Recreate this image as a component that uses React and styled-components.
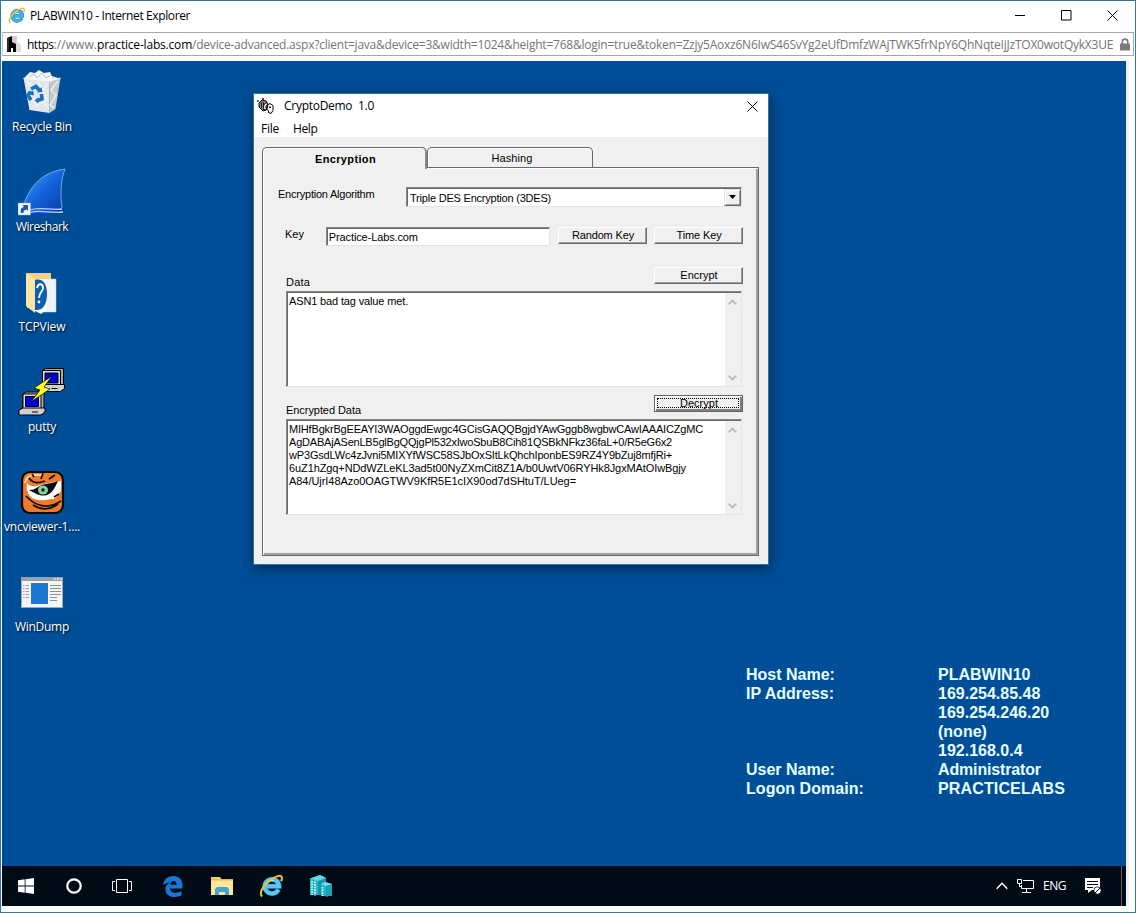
import React from 'react';
import styled, { createGlobalStyle, css } from 'styled-components';

const Global = createGlobalStyle`
  *, *::before, *::after { box-sizing: border-box; }
  body { margin: 0; background: #fff; overflow: hidden; }
`;

const UI = '"Open Sans", "Noto Sans", sans-serif';
const CLASSIC = '"Liberation Sans", Arial, sans-serif';

const Text = styled.span`
  white-space: pre;
  letter-spacing: ${(p) => p.$track || 0}px;
  ${(p) => p.$color && `color: ${p.$color};`}
`;

/* Browser window */
const BrowserWindow = styled.div`
  width: 1136px;
  height: 913px;
  display: flex;
  flex-direction: column;
  background: #fff;
  border: 1px solid #2f7aa8;
  border-top-color: #41708c;
  font: 12px/16px ${UI};
  color: #000;
`;

const BrowserTitle = styled.header`
  height: 31px;
  display: flex;
  align-items: center;
  padding: 0 17px 2px 7px;
  gap: 5px;
  svg { display: block; }
`;

const CaptionButtons = styled.div`
  margin-left: auto;
  display: flex;
  align-items: center;
  gap: 35px;
`;

const AddressBar = styled.div`
  height: 24px;
  margin: 0 1px 0 1px;
  border: 1px solid #a6a6a6;
  border-left-color: #c8c8c8;
  display: flex;
  align-items: center;
  padding: 0 3px 0 4px;
  svg { display: block; flex: none; }
`;

const Url = styled.div`
  flex: 1;
  padding: 1px 0 0 6px;
  white-space: nowrap;
  overflow: hidden;
  color: #757575;
`;

const Viewport = styled.main`
  margin: 5px 8px 0 1px;
  width: 1124px;
  height: 845px;
  display: flex;
  flex-direction: column;
  box-shadow: 3px 0 0 #f0f0f0;
`;

/* Remote desktop */
const Desktop = styled.section`
  position: relative;
  height: 805px;
  background: #004e98;
  overflow: hidden;
`;

const IconColumn = styled.div`
  width: 80px;
  padding-top: 7px;
  display: flex;
  flex-direction: column;
`;

const DesktopIcon = styled.div`
  height: 100px;
  display: flex;
  flex-direction: column;
  align-items: center;
  color: #fff;
  text-shadow: 1px 1px 2px #000;
  svg { display: block; flex: none; }
`;

const IconLabel = styled.div`
  margin-top: 3px;
  height: 16px;
  white-space: nowrap;
`;

const HostInfo = styled.div`
  position: absolute;
  left: 744px;
  top: 604px;
  display: grid;
  grid-template-columns: 192px auto;
  font: bold 16px/19px ${CLASSIC};
  color: #e6ffff;
  white-space: nowrap;
`;

/* Application dialog */
const Dialog = styled.section`
  position: absolute;
  left: 251px;
  top: 32px;
  width: 516px;
  height: 472px;
  border: 1px solid #2a78a8;
  background: #f0f0f0;
  box-shadow: 1px 3px 12px rgba(0, 0, 0, 0.5);
  font: 11px/13px ${CLASSIC};
`;

const DialogTitle = styled.div`
  height: 24px;
  background: #fff;
  display: flex;
  align-items: center;
  padding: 0 10px 0 3px;
  gap: 10px;
  font: 12px/16px ${UI};
  svg { display: block; flex: none; }
  svg:last-child { margin-left: auto; }
`;

const MenuBar = styled.div`
  height: 19px;
  background: #fff;
  display: flex;
  align-items: center;
  gap: 14px;
  padding: 2px 0 0 7px;
  font: 12px/16px ${UI};
`;

const Tabs = styled.div`
  display: flex;
  margin: 10px 0 0 8px;
  height: 20px;
`;

const Tab = styled.div`
  position: relative;
  height: 20px;
  width: 166px;
  display: flex;
  justify-content: center;
  align-items: center;
  border: 1px solid #696969;
  border-bottom: 0;
  border-radius: 5px 5px 0 0;
  background: #f0f0f0;
  box-shadow: inset 1px 1px 0 #fff;
  ${(p) => p.$active
    ? css`
        z-index: 1;
        width: 165px;
        height: 22px;
        font-weight: bold;
        border-right: 2px solid #8a8a8a;
        padding: 1px 0 0 3px;
      `
    : css`
        padding: 2px 0 0 4px;
      `}
`;

const TabPanel = styled.div`
  width: 497px;
  height: 389px;
  margin-left: 8px;
  border: 1px solid #696969;
  box-shadow: inset 1px 1px 0 #fff, inset -2px -2px 0 #a0a0a0;
  padding: 19px 15px 0 23px;
`;

const FieldRow = styled.div`
  display: flex;
  align-items: flex-start;
  height: ${(p) => p.$height}px;
`;

const AlgorithmLabel = styled.label`
  width: 128px;
  margin-left: -8px;
  padding-top: 1px;
`;

const KeyLabel = styled.label`
  width: 41px;
  margin-left: -1px;
  padding-top: 1px;
`;

const sunken = css`
  background: #fff;
  border: 1px solid;
  border-color: #848484 #e4e4e4 #e4e4e4 #848484;
  box-shadow: inset 1px 1px 0 #696969;
`;

const Combo = styled.div`
  ${sunken}
  width: 336px;
  height: 20px;
  display: flex;
  align-items: center;
  justify-content: space-between;
  padding: 1px 0 1px 3px;
`;

const ComboText = styled(Text)`
  padding-top: 2px;
`;

const DropButton = styled.span`
  width: 17px;
  height: 17px;
  display: flex;
  align-items: center;
  justify-content: center;
  background: #f0f0f0;
  border: 1px solid;
  border-color: #e3e3e3 #696969 #696969 #e3e3e3;
  box-shadow: inset 1px 1px 0 #fff, inset -1px -1px 0 #a0a0a0;
`;

const KeyInput = styled.div`
  ${sunken}
  width: 225px;
  height: 19px;
  padding: 3px 0 0 2px;
  margin-right: 8px;
`;

const PushButton = styled.div`
  width: 89px;
  height: 17px;
  flex: none;
  display: flex;
  align-items: center;
  justify-content: center;
  background: #f0f0f0;
  border: 1px solid;
  border-color: #fff #696969 #696969 #fff;
  box-shadow: inset -1px -1px 0 #a0a0a0;
  padding-left: 1px;
  & + & { margin-left: 7px; }
  ${(p) => p.$focused && css`
    border-color: #646464;
    box-shadow: inset 1px 1px 0 #fff, inset -2px -2px 0 #808080;
    padding: 0 1px 1px 0;
  `}
`;

const FocusRing = styled.span`
  width: 82px;
  height: 10px;
  border: 1px dotted #000;
  display: flex;
  align-items: center;
  justify-content: center;
  padding-left: 2px;
`;

const LabelRow = styled.div`
  display: flex;
  justify-content: space-between;
  height: ${(p) => p.$height}px;
`;

const SectionLabel = styled.span`
  align-self: flex-end;
  margin-bottom: 2px;
`;

const ButtonSlot = styled.div`
  padding-top: ${(p) => p.$top || 0}px;
`;

const TextArea = styled.div`
  ${sunken}
  width: 456px;
  height: 96px;
  display: flex;
`;

const Lines = styled.div`
  flex: 1;
  padding: 3px 0 0 2px;
  display: flex;
  flex-direction: column;
`;

const ScrollTrack = styled.div`
  width: 16px;
  margin: 1px 0 0;
  background: #f0f0f0;
  display: flex;
  flex-direction: column;
  justify-content: space-between;
  align-items: center;
  padding: 6px 1px 5px 0;
  svg { display: block; }
`;

/* Taskbar */
const Taskbar = styled.footer`
  height: 40px;
  background: #010b16;
  display: flex;
  align-items: center;
  color: #fff;
  svg { display: block; }
`;

const TaskButton = styled.div`
  width: ${(p) => p.$w}px;
  height: 40px;
  display: flex;
  align-items: center;
  justify-content: center;
`;

const Tray = styled.div`
  margin-left: auto;
  height: 40px;
  padding-right: 19px;
  margin-right: 4px;
  border-right: 1px solid #5a6068;
  display: flex;
  align-items: center;
  gap: 9px;
`;

const TrayLabel = styled.span`
  margin-right: 9px;
`;

/* Drawings */
const IELogo = ({ size, body = '#3fb0e8' }) => (
  <svg width={size} height={size} viewBox="0 0 24 24" fill="none">
    <path d="M19.500 15.500a7.200 7.200 0 1 1 .7-3.200H6.500" stroke="#1c78b8" strokeWidth="5" />
    <path d="M19.300 15.500a7.100 7.100 0 1 1 .7-3.200H6.500" stroke={body} strokeWidth="4" />
    <path d="M8 8.800c1.500-2.200 4-2.700 6.300-2" stroke="#b9ebff" strokeWidth="1.300" />
    <path d="M3.200 22.300C.2 20.300 2.500 13 9.500 7.300 15.500 2.300 21.500.5 22.700 3c.5 1 .2 2.600-.6 4.200" stroke="#f0c22e" strokeWidth="2" />
  </svg>
);

const SiteIcon = () => (
  <svg width="14" height="16" viewBox="0 0 14 16">
    <path d="M5 0h5v9H5z" fill="#cfcfcf" />
    <path d="M9 5l5 4v7H8z" fill="#dedede" />
    <path d="M0 2l5-2v6l4 2v8H6v-4H4v4H0z" fill="#000" />
    <path d="M1 2v13" stroke="#555" />
  </svg>
);

const Lock = () => (
  <svg width="10" height="13" viewBox="0 0 10 13">
    <path d="M2.300 6V3.800a2.700 2.700 0 0 1 5.400 0V6" fill="none" stroke="#7a7a7a" strokeWidth="1.600" />
    <rect y="5.500" width="10" height="7" rx=".7" fill="#7a7a7a" />
  </svg>
);

const Cross = ({ size }) => (
  <svg width={size} height={size} viewBox="0 0 11 11">
    <path d="M.5.500l10 10M10.500.500l-10 10" stroke="#000" strokeWidth="1" />
  </svg>
);

const RecycleBin = () => (
  <svg width="48" height="48" viewBox="0 0 48 48">
    <path d="M7 9l5-5 5 1 4-3 5 3 6-1 2 4 6 2-4 5H9z" fill="#f2f4f5" />
    <path d="M11 9l5-3 3 4 5-5 4 5 5-3 3 4" fill="none" stroke="#bcc5cb" />
    <path d="M5.500 10l26 3v32l-20-3z" fill="#e3e7ea" />
    <path d="M31.500 13l11-3-5 31-6 4z" fill="#c3c9cd" />
    <path d="M5.500 10l26 3 11-3" fill="none" stroke="#fafafa" strokeWidth="1.200" />
    <path d="M9 13l7 8-4 5 6 12 7-5 6 8M30 15l-6 9 6 8M19 12l6 10M40 13l-7 9 5 5-6 10 4 3" stroke="#f8f9fa" strokeWidth="1.400" fill="none" opacity=".8" />
    <path d="M13 21l5-2.500 3.500 4M23.500 26l.5 5-5 1.500M13 32l-3-4.500 2.500-4" fill="none" stroke="#1372c4" strokeWidth="3.600" />
    <path d="M19 24.500l5.500-.5-1-5zM20.500 29.500v6l-4-3zM9 25.500l6-3 1 5z" fill="#1372c4" />
  </svg>
);

const Shortcut = () => (
  <g>
    <rect x="0" y="35" width="12.500" height="12" fill="#f4f6f8" stroke="#9ab" strokeWidth=".5" />
    <path d="M3 45c-.9-3.500 0-5.500 3-6l-1.500-2H10v6l-1.500-1.600C6 42 5.500 43 5.500 45z" fill="#1b5aa6" />
  </g>
);

const Wireshark = () => (
  <svg width="48" height="48" viewBox="0 0 48 48">
    <defs>
      <linearGradient id="fin" x1="0" y1="0" x2="1" y2="1">
        <stop offset="0" stopColor="#4ea2ff" />
        <stop offset=".5" stopColor="#1464dc" />
        <stop offset="1" stopColor="#0638a4" />
      </linearGradient>
    </defs>
    <path d="M3 45C9 20 24 3 47 1c-5 11-5 29-2 45z" fill="url(#fin)" />
    <path d="M5 39C12 17 25 4 47 1c-4 10-5 24-3 39" fill="none" stroke="#7ebcff" strokeWidth=".8" />
    <path d="M12 42c10-4 21 1 32-1M12 44.500c10-3 21 1 33-.5" stroke="#b9d5ff" strokeWidth="1.300" fill="none" />
    <Shortcut />
  </svg>
);

const TcpFolder = () => (
  <svg width="48" height="48" viewBox="0 0 48 48">
    <path d="M9 5h24v35H9z" fill="#f1d37f" />
    <path d="M24 11h14v33H24z" fill="#eef4fa" stroke="#cfd8e2" strokeWidth=".5" />
    <path d="M17 12l8-1 4 5v25l-6 5-6-3z" fill="#fff" />
    <path d="M17 12c8-2 12 4 12 14s-4 17-12 16z" fill="#0c5db2" />
    <path d="M19 20c1-5 6-5 6 0 0 4-4 4-4 10" fill="none" stroke="#fff" strokeWidth="1.800" />
    <circle cx="21" cy="34" r="1.400" fill="#fff" />
    <path d="M8 5l9 6v34l-9-7z" fill="#fbe6a5" />
  </svg>
);

const Computer = () => (
  <g stroke="#000" strokeWidth="1">
    <path d="M4 2l3-2h18v15l-3 3H4z" fill="#a8a8a8" />
    <path d="M4 2h18v15H4z" fill="#dcdcdc" />
    <path d="M6.500 4.500h13v10h-13z" fill="#0000e0" />
    <path d="M0 18l4-2h22v4l-4 3H0z" fill="#d0d0d0" />
    <path d="M13 20h6" />
  </g>
);

const Putty = () => (
  <svg width="48" height="48" viewBox="0 0 48 48">
    <g transform="translate(20.500 .5)"><Computer /></g>
    <g transform="translate(1 24)"><Computer /></g>
    <path d="M34 8L16 20l6 2-9 12 19-13-6-2z" fill="#ffff20" stroke="#000" strokeWidth=".7" />
  </svg>
);

const Vnc = () => (
  <svg width="48" height="48" viewBox="0 0 48 48">
    <rect x="4" y="4" width="41" height="41" rx="8" fill="#f07a2a" stroke="#0a0a0a" strokeWidth="2.200" />
    <path d="M7 15c1-5 4-8 9-8h8" fill="none" stroke="#ffd2a8" strokeWidth="2" />
    <path d="M9 15c3 4 8 4 13 2l13-3 8-1v10c-3 4-5 9-10 8-8 2-17 2-21-3-3-4-4-8-3-13z" fill="#fff" />
    <path d="M11 22c4 0 6-1 9-3 6-4 12-3 20-6-3 6-5 12-11 14-7 2-12-2-18-5z" fill="#0c0c0c" />
    <ellipse cx="25" cy="22" rx="5" ry="4.500" fill="#8ed09a" />
    <circle cx="25" cy="22" r="1.800" fill="#0b2b12" />
    <path d="M11 10c4 6 11 5 16 3M23 11l2-6M16 9l-2-3M31 11l6-4M8 28c9 10 22 14 35 5M15 37c8 5 17 5 25-1M36 29l5-3" fill="none" stroke="#111" strokeWidth="1.700" />
  </svg>
);

const WinDump = () => (
  <svg width="48" height="48" viewBox="0 0 48 48">
    <rect x="3.500" y="9.500" width="41" height="30" fill="#f4f4f4" stroke="#a4a8ac" />
    <path d="M3 9h42v4H3z" fill="#9aa0a4" />
    <path d="M36 11h1.500M39 11h1.500M42 11h1.500" stroke="#fff" strokeWidth="1.500" />
    <rect x="13" y="15" width="17" height="21" fill="#1a78d0" />
    <path d="M5 17.500h6M5 20.500h6M5 23.500h6M5 26.500h6M5 29.500h6" stroke="#a0a0a0" strokeDasharray="1.500 1 3.500" />
    <path d="M32 17.500h11M32 20.500h11M32 23.500h11M32 26.500h11M32 29.500h7M32 32.500h7" stroke="#8f8f8f" />
  </svg>
);

const AppIcon = () => (
  <svg width="17" height="17" viewBox="0 0 17 17">
    <path d="M0 2h2v2H0z" fill="#18a058" />
    <path d="M5 0h2v2H5z" fill="#c8203c" />
    <path d="M2 5l3-3 4 1 2 3-2 6-3 1-4-4z" fill="#888" stroke="#000" />
    <path d="M4.500 4v6M6.500 4v8" stroke="#222" />
    <path d="M6.500 9.500c0-3 1-4.500 3-4.500.8 0 1.500.5 1.500 1.500C8.500 7 8.500 10 10 11.500c-2 1-3.500 0-3.500-2z" fill="#eee" stroke="#000" />
    <path d="M10.500 7.500l2.500-2 3 2v5l-2 3-2.500-1v-2l-1.500-1z" fill="#fff" stroke="#000" />
    <path d="M12 8.500h2v1.500h-2z" fill="#111" />
  </svg>
);

const ScrollArrow = ({ down }) => (
  <svg width="9" height="6" viewBox="0 0 9 6">
    <path d={down ? 'M.7.800l3.800 3.700L8.300.8' : 'M.7 5.200l3.800-3.700 3.800 3.700'} fill="none" stroke="#bdbdbd" strokeWidth="1.900" />
  </svg>
);

const StartLogo = () => (
  <svg width="16" height="16" viewBox="0 0 16 16" fill="#fff">
    <path d="M0 2.300L6.700 1.300v6.300H0zM7.500 1.200L16 0v7.600H7.500zM0 8.400h6.700v6.300L0 13.700zM7.500 8.400H16V16l-8.500-1.200z" />
  </svg>
);

const TaskView = () => (
  <svg width="20" height="14" viewBox="0 0 20 14" fill="none" stroke="#fff">
    <path d="M4.500.5h11v13h-11zM3 2.500H.5v9H3M17 2.500h2.500v9H17" />
  </svg>
);

const Edge = () => (
  <svg width="20" height="21" viewBox="0 0 21 22">
    <path d="M0 9.500C.8 4 4.500 0 11 0c6 0 9.500 4 9.500 9.500V13H7.300c.2 3 2.500 4.500 5.700 4.500 2.500 0 4.700-.7 6.500-1.800v4.500c-2 1.200-4.500 1.800-7.500 1.800-6 0-9.500-3.500-9.500-8.500 0-3 1.800-5.500 4.700-6.800C4 7 1.500 8 0 9.500zm7.500-.3h6.800c0-2.500-1.200-4-3.300-4-2 0-3.200 1.400-3.500 4z" fill="#1878d4" />
  </svg>
);

const Explorer = () => (
  <svg width="22" height="18" viewBox="0 0 22 18">
    <path d="M0 0h9l1.500 2H22v16H0z" fill="#f3d06b" />
    <path d="M0 4h22v14H0z" fill="#fce79c" />
    <path d="M0 2.500h22" stroke="#d9b050" strokeWidth=".7" />
    <path d="M4 18v-6l2-2h10l2 2v6h-4v-3H8v3z" fill="#41a5d0" />
  </svg>
);

const Buildings = () => (
  <svg width="23" height="22" viewBox="0 0 23 22">
    <path d="M1 3.500L11 0l6 3v17H1z" fill="#25b6c8" />
    <path d="M9 5l8-2v17H9z" fill="#1497ab" />
    <path d="M1 3.500L11 0l6 3-8 3z" fill="#5ddbe6" />
    <path d="M12 9l4-2 7 2v12h-11z" fill="#20b4c6" />
    <path d="M12 9l4-2 7 2-6 2z" fill="#6fe3ec" />
    <path d="M3 6v14M6 6.500v14M13.500 12v9" stroke="#d8fbff" strokeWidth="1.700" strokeDasharray="1.600 1" />
    <path d="M17 11v11l6-2V9z" fill="#1aa3b6" />
  </svg>
);

const Network = () => (
  <svg width="17" height="14" viewBox="0 0 17 14" fill="none" stroke="#fff">
    <path d="M6 1.500h10.500v8H4.500V6M9.500 10v3M5 13.500h9M.5.500h4v4h-4zM2.500 4.500v3h2" />
  </svg>
);

const Notifications = () => (
  <svg width="18" height="17" viewBox="0 0 18 17">
    <path d="M1 0h15v12H8l-4 3v-3H1z" fill="#fff" />
    <path d="M3 3.500h11M3 6.500h11M3 9.500h6" stroke="#010b16" strokeWidth="1.200" />
    <circle cx="13.500" cy="12.500" r="3.700" fill="#fff" stroke="#010b16" strokeWidth=".8" />
    <path d="M11 15l5-5" stroke="#010b16" />
  </svg>
);

const shortcuts = [
  ['Recycle Bin', -0.25, RecycleBin],
  ['Wireshark', -0.5, Wireshark],
  ['TCPView', -0.09, TcpFolder],
  ['putty', -0.26, Putty],
  ['vncviewer-1....', -0.2, Vnc],
  ['WinDump', -0.29, WinDump],
];

const hostRows = [
  ['Host Name:', 0, 'PLABWIN10', 0],
  ['IP Address:', 0, '169.254.85.48', 0],
  ['', 0, '169.254.246.20', 0],
  ['', 0, '(none)', 0],
  ['', 0, '192.168.0.4', 0],
  ['User Name:', 0, 'Administrator', -0.15],
  ['Logon Domain:', 0.05, 'PRACTICELABS', 0.14],
];

const cipherLines = [
  ['MIHfBgkrBgEEAYI3WAOggdEwgc4GCisGAQQBgjdYAwGggb8wgbwCAwIAAAICZgMC', -0.18],
  ['AgDABAjASenLB5glBgQQjgPl532xIwoSbuB8Cih81QSBkNFkz36faL+0/R5eG6x2', -0.211],
  ['wP3GsdLWc4zJvni5MIXYfWSC58SJbOxSItLkQhchIponbES9RZ4Y9bZuj8mfjRi+', -0.169],
  ['6uZ1hZgq+NDdWZLeKL3ad5t00NyZXmCit8Z1A/b0UwtV06RYHk8JgxMAtOIwBgjy', -0.103],
  ['A84/UjrI48Azo0OAGTWV9KfR5E1cIX90od7dSHtuT/LUeg=', -0.053],
];

const ScrollBar = () => (
  <ScrollTrack><ScrollArrow /><ScrollArrow down /></ScrollTrack>
);

function CryptoDialog() {
  return (
    <Dialog>
      <DialogTitle>
        <AppIcon />
        <Text $track={-0.28}>CryptoDemo  1.0</Text>
        <Cross size={11} />
      </DialogTitle>
      <MenuBar>
        <Text $track={-0.25}>File</Text>
        <Text $track={-0.4}>Help</Text>
      </MenuBar>
      <Tabs>
        <Tab $active><Text $track={0.36}>Encryption</Text></Tab>
        <Tab><Text $track={0.08}>Hashing</Text></Tab>
      </Tabs>
      <TabPanel>
        <FieldRow $height={40}>
          <AlgorithmLabel><Text $track={-0.225}>Encryption Algorithm</Text></AlgorithmLabel>
          <Combo>
            <ComboText $track={-0.21}>Triple DES Encryption (3DES)</ComboText>
            <DropButton>
              <svg width="7" height="4" viewBox="0 0 7 4"><path d="M0 0h7L3.500 4z" /></svg>
            </DropButton>
          </Combo>
        </FieldRow>
        <FieldRow $height={40}>
          <KeyLabel><Text>Key</Text></KeyLabel>
          <KeyInput><Text $track={-0.12}>Practice-Labs.com</Text></KeyInput>
          <PushButton><Text $track={-0.16}>Random Key</Text></PushButton>
          <PushButton><Text $track={-0.12}>Time Key</Text></PushButton>
        </FieldRow>
        <LabelRow $height={24}>
          <SectionLabel><Text $track={0.2}>Data</Text></SectionLabel>
          <ButtonSlot><PushButton><Text>Encrypt</Text></PushButton></ButtonSlot>
        </LabelRow>
        <TextArea>
          <Lines><Text $track={-0.14}>ASN1 bad tag value met.</Text></Lines>
          <ScrollBar />
        </TextArea>
        <LabelRow $height={32}>
          <SectionLabel><Text $track={-0.06}>Encrypted Data</Text></SectionLabel>
          <ButtonSlot $top={8}>
            <PushButton $focused><FocusRing><Text>Decrypt</Text></FocusRing></PushButton>
          </ButtonSlot>
        </LabelRow>
        <TextArea>
          <Lines>
            {cipherLines.map(([line, track]) => <Text key={line} $track={track}>{line}</Text>)}
          </Lines>
          <ScrollBar />
        </TextArea>
      </TabPanel>
    </Dialog>
  );
}

export default function App() {
  return (
    <>
      <Global />
      <BrowserWindow>
        <BrowserTitle>
          <IELogo size={17} />
          <Text $track={-0.39}>PLABWIN10 - Internet Explorer</Text>
          <CaptionButtons>
            <svg width="11" height="11" viewBox="0 0 11 11"><path d="M0 5.500h10" stroke="#000" /></svg>
            <svg width="11" height="11" viewBox="0 0 11 11"><path d="M.5.500h9.500v9.500H.5z" fill="none" stroke="#000" /></svg>
            <Cross size={11} />
          </CaptionButtons>
        </BrowserTitle>
        <AddressBar>
          <SiteIcon />
          <Url>
            <Text $color="#000" $track={-0.5}>https</Text>
            <Text $track={0.07}>://www.</Text>
            <Text $color="#000" $track={-0.19}>practice-labs.com</Text>
            <Text $track={-0.226}>/device-advanced.aspx?client=java&amp;device=3&amp;width=1024&amp;height=768&amp;login=true&amp;token=Zzjy5Aoxz6N6IwS46SvYg2eUfDmfzWAjTWK5frNpY6QhNqteIjJzTOX0wotQykX3UE</Text>
          </Url>
          <Lock />
        </AddressBar>
        <Viewport>
          <Desktop>
            <IconColumn>
              {shortcuts.map(([name, track, Icon]) => (
                <DesktopIcon key={name}>
                  <Icon />
                  <IconLabel><Text $track={track}>{name}</Text></IconLabel>
                </DesktopIcon>
              ))}
            </IconColumn>
            <HostInfo>
              {hostRows.map(([label, lt, value, vt]) => (
                <React.Fragment key={value}>
                  <Text $track={lt}>{label}</Text>
                  <Text $track={vt}>{value}</Text>
                </React.Fragment>
              ))}
            </HostInfo>
            <CryptoDialog />
          </Desktop>
          <Taskbar>
            <TaskButton $w={48}><StartLogo /></TaskButton>
            <TaskButton $w={48}>
              <svg width="16" height="16" viewBox="0 0 16 16"><circle cx="8" cy="8" r="6.700" fill="none" stroke="#fff" strokeWidth="2.200" /></svg>
            </TaskButton>
            <TaskButton $w={48}><TaskView /></TaskButton>
            <TaskButton $w={53}><Edge /></TaskButton>
            <TaskButton $w={46}><Explorer /></TaskButton>
            <TaskButton $w={51}><IELogo size={24} body="#5cc8f0" /></TaskButton>
            <TaskButton $w={48}><Buildings /></TaskButton>
            <Tray>
              <svg width="12" height="8" viewBox="0 0 12 8"><path d="M.7 6.800L6 1.300l5.300 5.500" fill="none" stroke="#fff" strokeWidth="1.400" /></svg>
              <Network />
              <TrayLabel><Text $track={-0.47}>ENG</Text></TrayLabel>
              <Notifications />
            </Tray>
          </Taskbar>
        </Viewport>
      </BrowserWindow>
    </>
  );
}
